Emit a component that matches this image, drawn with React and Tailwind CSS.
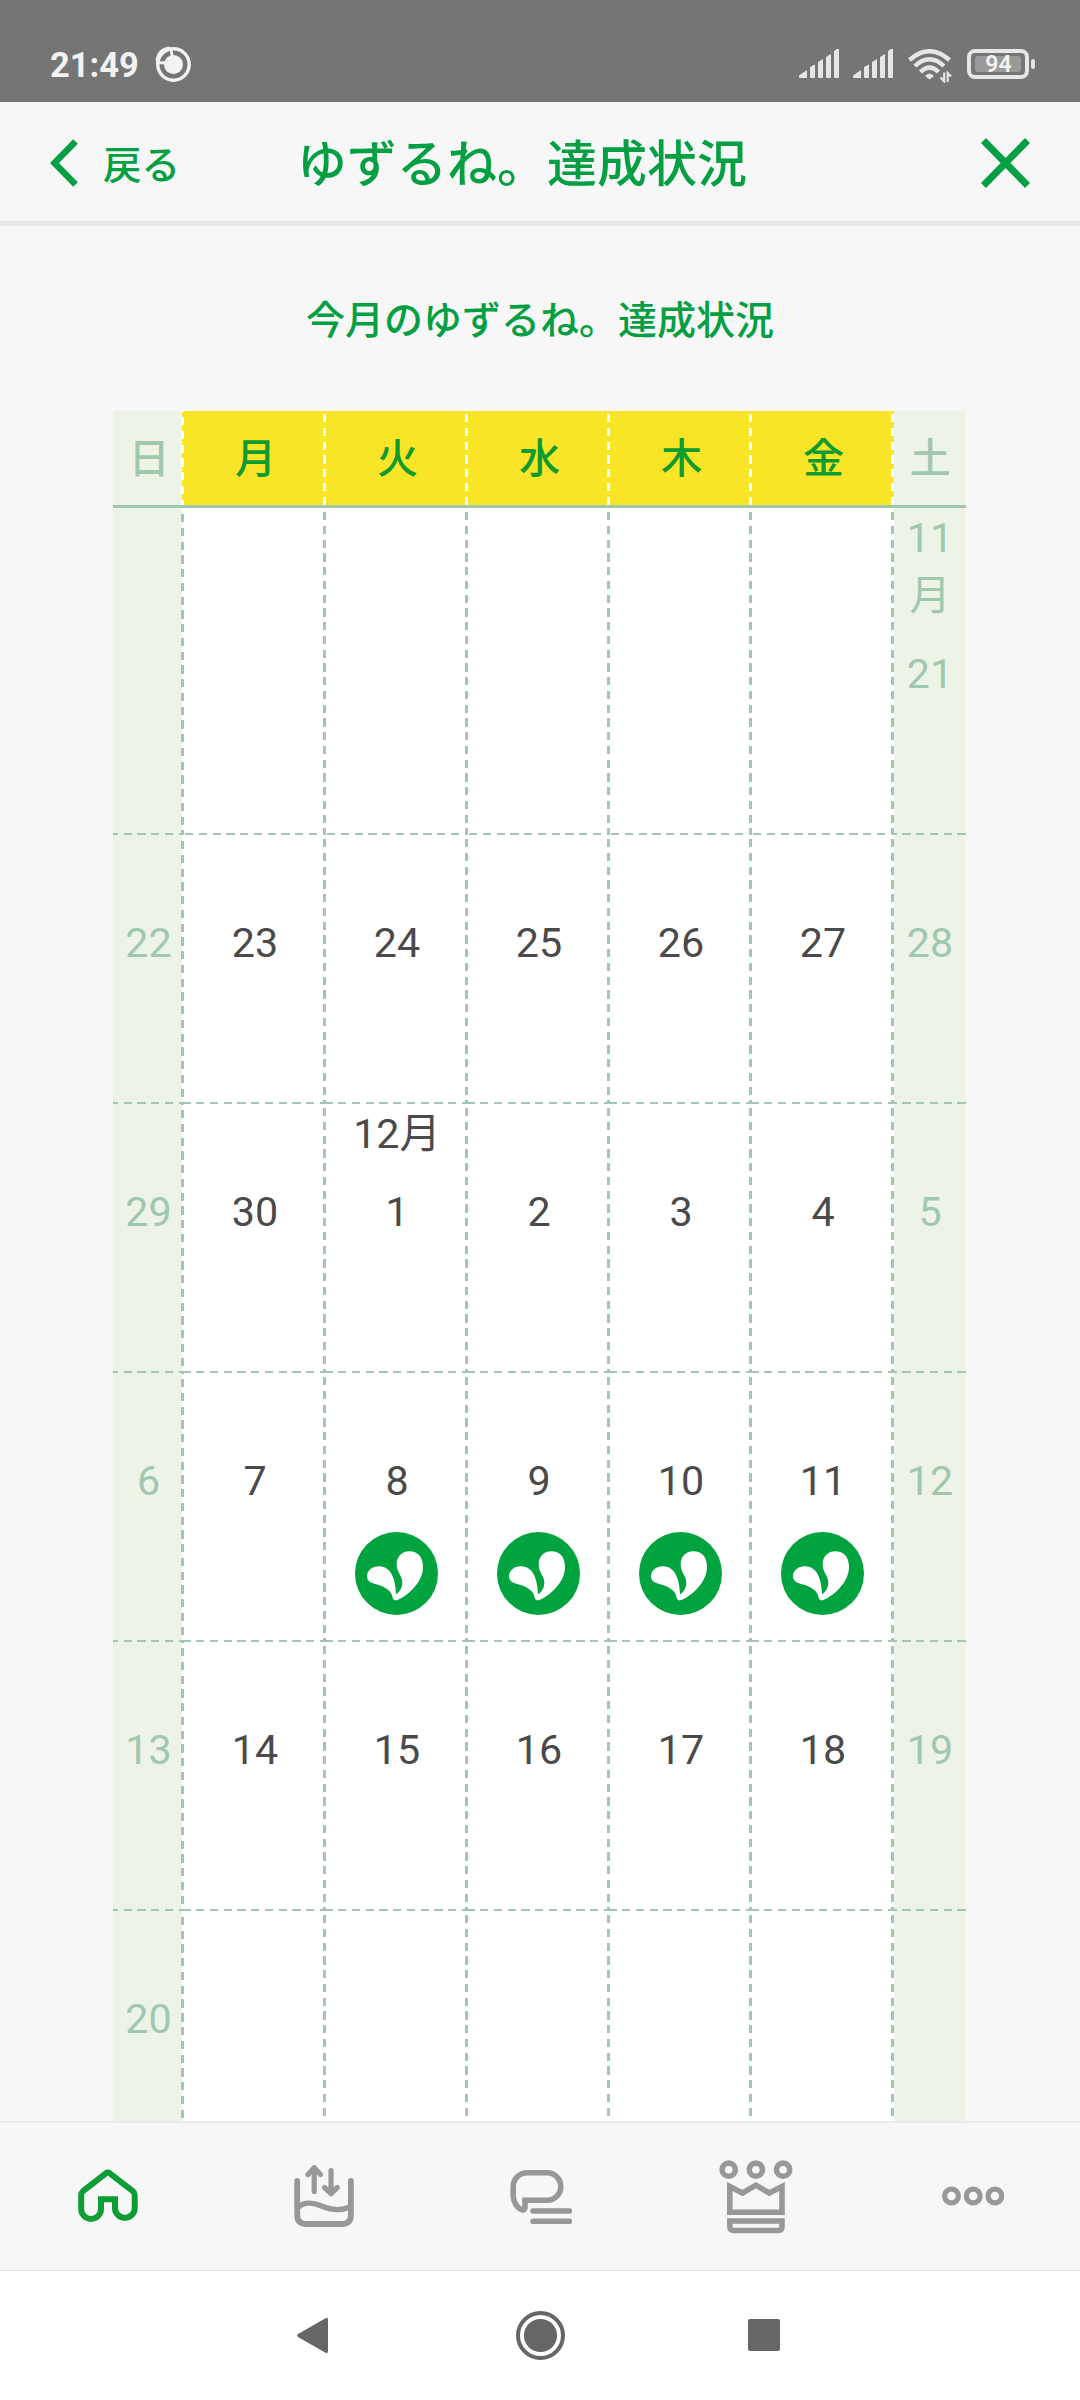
import clsx from 'clsx'

const WEEKDAYS = ['日', '月', '火', '水', '木', '金', '土']

const WEEKS = [
  [{}, {}, {}, {}, {}, {}, { month: '11月', day: 21 }],
  [{ day: 22 }, { day: 23 }, { day: 24 }, { day: 25 }, { day: 26 }, { day: 27 }, { day: 28 }],
  [{ day: 29 }, { day: 30 }, { month: '12月', day: 1 }, { day: 2 }, { day: 3 }, { day: 4 }, { day: 5 }],
  [{ day: 6 }, { day: 7 }, { day: 8, done: true }, { day: 9, done: true }, { day: 10, done: true }, { day: 11, done: true }, { day: 12 }],
  [{ day: 13 }, { day: 14 }, { day: 15 }, { day: 16 }, { day: 17 }, { day: 18 }, { day: 19 }],
  [{ day: 20 }, {}, {}, {}, {}, {}, {}],
]

const GRID = 'grid grid-cols-[71px_repeat(5,142px)_72px]'

// vertical dashes, the sunday column has its own phase
const V_DASH = 'bg-white bg-[repeating-linear-gradient(180deg,transparent_-1.5px_4px,#a2c6b1_4px_12.25px)]'
const V_DASH_SUN = 'bg-[repeating-linear-gradient(180deg,#a2c6b1_-7.75px_0.5px,transparent_0.5px_6px),linear-gradient(90deg,#edf4e7_1px,#fff_1px)]'
const V_DASH_HEAD = 'bg-[#f9e528] bg-[repeating-linear-gradient(180deg,transparent_-2.5px_3px,#fff_3px_11.25px)]'
const V_DASH_HEAD_SUN = 'bg-[repeating-linear-gradient(180deg,transparent_0.5px_6px,#fff_6px_14.25px),linear-gradient(90deg,#edf4e7_1px,#f9e528_1px)]'

// horizontal dashes
const H_DASH = 'bg-[repeating-linear-gradient(90deg,#a2c6b1_-1.7px_6.55px,transparent_6.55px_12.05px)]'
const H_DASH_FIRST = 'bg-[repeating-linear-gradient(90deg,transparent_-4.5px_1px,#a2c6b1_1px_9.25px)]'
const H_DASH_SUN = 'bg-[repeating-linear-gradient(90deg,#a2c6b1_-3.1px_5.15px,transparent_5.15px_10.65px)]'
const H_DASH_SAT = 'bg-[repeating-linear-gradient(90deg,#a2c6b1_-5.4px_2.85px,transparent_2.85px_8.35px)]'

function SignalIcon() {
  return (
    <svg width="40" height="29" viewBox="0 0 40 29" fill="#e6e6e6">
      <path d="M0 26.500 8 21V29H1Q0 29 0 28Z" />
      <path d="M11 18 16 15.500V28Q16 29 15 29H12Q11 29 11 28Z" />
      <path d="M19 13 24 10V28Q24 29 23 29H20Q19 29 19 28Z" />
      <path d="M27 8 32 5V28Q32 29 31 29H28Q27 29 27 28Z" />
      <path d="M35 2 38 0H40V28Q40 29 39 29H36Q35 29 35 28Z" />
    </svg>
  )
}

function WifiIcon() {
  return (
    <svg width="44" height="34" viewBox="0 0 44 34" fill="none" stroke="#e6e6e6" strokeWidth="4.400">
      <path d="M1.500 11Q21.500-6.500 41.500 11" />
      <path d="M7 17Q21.500 3.500 36 17" />
      <path d="M12.500 23Q21.500 14 30.500 23" />
      <path d="M21.500 30.500 17 27Q21.500 22 26 27Z" fill="#e6e6e6" stroke="none" />
      <path d="M36.200 23.500V32.500L32.500 28.500M39.700 33V24L43 27.500" strokeWidth="2.200" />
    </svg>
  )
}

function StatusBar() {
  return (
    <div className="flex h-[102px] shrink-0 items-start bg-[#757575] pl-[50px] pr-[45px]">
      <span className="mt-[45px] text-[34.5px] leading-[40px] font-bold text-[#f2f2f2]">21:49</span>
      <svg className="mt-[45px] ml-[15px]" width="38" height="38" viewBox="0 0 38 38" fill="none" stroke="#f2f2f2">
        <circle cx="19.500" cy="19.500" r="15.700" strokeWidth="3.400" />
        <circle cx="19.500" cy="19.500" r="9.500" fill="#f2f2f2" stroke="none" />
        <path d="M2 17.500 12 18M16.500 3 18.500 12" strokeWidth="2.800" />
        <path d="M3 16C4 8 9 3.500 16 3" strokeWidth="3" />
      </svg>
      <div className="mt-[49px] ml-auto flex items-start">
        <SignalIcon />
        <div className="w-[14px]" />
        <SignalIcon />
        <div className="w-[15px]" />
        <WifiIcon />
        <div className="ml-[15px] flex h-[30px] w-[62px] items-center justify-center rounded-[8px] border-4 border-[#e6e6e6]">
          <span className="flex h-4 w-[46px] items-center justify-center rounded-[3px] bg-[#999] pt-[3px] pl-[1px] text-[23px] font-semibold text-[#f2f2f2]">94</span>
        </div>
        <div className="mt-[10px] ml-[2px] h-[10px] w-1 rounded-[2px] bg-[#e6e6e6]" />
      </div>
    </div>
  )
}

function Header() {
  return (
    <header className="grid h-[124px] shrink-0 grid-cols-[250px_1fr_286px] items-center border-b-[5px] border-[#e6e6e6] bg-[#f7f7f7] pt-[3px] font-medium text-[#049f42]">
      <button className="flex items-center pl-[50px]">
        <svg width="28" height="48" viewBox="0 0 28 48" fill="none" stroke="#049f42" strokeWidth="6.500">
          <path d="M25.500 2.500 4.500 24 25.500 45.500" />
        </svg>
        <span className="ml-[25px] pt-[5px] text-[38.500px] leading-[56px]">戻る</span>
      </button>
      <h1 className="pt-[3px] text-center text-[50px] leading-[72px] font-medium whitespace-nowrap">ゆずるね。達成状況</h1>
      <button className="flex justify-end pr-[50px]">
        <svg width="49" height="50" viewBox="0 0 49 50" fill="none" stroke="#049f42" strokeWidth="7">
          <path d="M2.500 2.500 46.500 47.500M46.500 2.500 2.500 47.500" />
        </svg>
      </button>
    </header>
  )
}

function DoneMark() {
  return (
    <svg className="mr-[2px]" width="83" height="83" viewBox="0 0 249 249">
      <circle cx="124.500" cy="124.500" r="124.500" fill="#00a33e" />
      <path d="M123 187C122 150 112 103 72 103C50 103 36 117 36 133C36 145 44 152 60 156C85 162 107 174 111 190C113 202 117 206 124 205C140 202 204 160 204 105C204 75 188 58 163 58C142 58 125 72 125 97C125 122 142 132 142 152C142 167 134 180 123 187Z" fill="#fff" />
    </svg>
  )
}

function hDash(row, col) {
  if (col === 0) return H_DASH_SUN
  if (col === 6) return H_DASH_SAT
  return row === 0 ? H_DASH_FIRST : H_DASH
}

function DayCell({ month, day, done, row, col }) {
  const weekend = col === 0 || col === 6
  return (
    <div className={clsx('flex flex-col', weekend ? 'bg-[#edf4e7] text-[#a0c8ae]' : 'bg-white text-[#4a4a4a]')}>
      <div className="flex flex-1">
        <div className={clsx('flex flex-1 flex-col items-center pt-[1px] text-center text-[41.25px] leading-[58px]', col < 6 && 'pl-[3px]')}>
          <div className="min-h-[58px]">{month}</div>
          <div className="mt-5 h-[58px]">{day}</div>
          <div className="flex h-[130px] justify-center pt-[22px]">{done && <DoneMark />}</div>
        </div>
        {col < 6 && <div className={clsx('w-[3px]', col === 0 ? V_DASH_SUN : V_DASH)} />}
      </div>
      <div className={clsx('h-[2px]', hDash(row, col))} />
    </div>
  )
}

function Calendar() {
  return (
    <div className="mr-[114px] ml-[113px]">
      <div className={clsx(GRID, 'h-[97px] border-b-[3px] border-[#9fc6ae]')}>
        {WEEKDAYS.map((name, col) => {
          const weekend = col === 0 || col === 6
          return (
            <div key={name} className={clsx('flex', weekend ? 'bg-[#edf4e7] text-[#a0c8ae]' : 'bg-[#f9e528] text-[#0f9b2e]')}>
              <div className={clsx('flex flex-1 items-center justify-center pt-[4px] text-[41.25px] font-medium', col < 6 && 'pl-[4px]')}>{name}</div>
              {col < 6 && <div className={clsx('w-[3px]', col === 0 ? V_DASH_HEAD_SUN : V_DASH_HEAD)} />}
            </div>
          )
        })}
      </div>
      {WEEKS.map((week, row) => (
        <div key={row} className={GRID}>
          {week.map((cell, col) => <DayCell key={col} {...cell} row={row} col={col} />)}
        </div>
      ))}
    </div>
  )
}

function TabBar() {
  return (
    <nav className="grid h-[150px] shrink-0 grid-cols-5 items-start justify-items-center border-t-2 border-b border-t-[#ebebeb] border-b-[#e3e3e3] bg-[#f7f7f7]">
      <svg className="mt-[46px]" width="60" height="54" viewBox="0 0 60 54" fill="none" stroke="#0c9d35" strokeWidth="6">
        <path d="M3.200 40V26Q3.200 23.700 5 22.200L27.800 4.300Q29.800 2.800 31.800 4.300L54.800 22.200Q56.700 23.700 56.700 26V40A9.900 9.900 0 0 1 37 40V30.300H23V40A9.900 9.900 0 0 1 3.200 40Z" />
      </svg>
      <svg className="mt-[41px]" width="60" height="64" viewBox="0 0 60 64" fill="none" stroke="#989898" strokeWidth="5.800" strokeLinecap="round" strokeLinejoin="round">
        <path d="M3.200 17V51Q3.200 60 12.500 60H47.500Q56.900 60 56.900 51V17" />
        <path d="M4 43.500C11 36.500 20 39 28 42.300C37 46 46 47.500 56 43" strokeWidth="5.400" />
        <path d="M20.200 27.500V3.500M14 10.500 20.200 3.700 26.500 10.500M37 6.500V29.500M30.500 23.500 37 29.500 43.300 23.500" strokeWidth="5.200" />
      </svg>
      <svg className="mt-[46px]" width="64" height="56" viewBox="-2 0 64 56" fill="none" stroke="#989898" strokeWidth="5.600">
        <path d="M15 31.300H37A13.800 13.800 0 0 0 37 3.700H18C9 3.700 3.200 9.500 3.200 18V27C3.200 33.500 8 39.500 11.700 40.700Q15 42 15 38Z" />
        <path d="M23 42H59.500M23 52.300H59.500" strokeLinecap="round" />
      </svg>
      <svg className="mt-[37px]" width="74" height="74" viewBox="0 0 74 74" fill="none" stroke="#989898" strokeWidth="5.600">
        <circle cx="9.700" cy="9.700" r="6.600" />
        <circle cx="36.900" cy="9.700" r="6.600" />
        <circle cx="64.100" cy="9.700" r="6.600" />
        <path d="M10.800 26.500 23.500 33 36.900 25.200 50.300 33 63 26.500V52.200H10.800Z" />
        <path d="M10.800 61H63V66.500Q63 70.500 59 70.500H14.800Q10.800 70.500 10.800 66.500Z" />
      </svg>
      <svg className="mt-[63px]" width="64" height="20" viewBox="-1 0 64 20" fill="none" stroke="#989898" strokeWidth="5.200">
        <circle cx="10.500" cy="10" r="6.900" />
        <circle cx="32.200" cy="10" r="6.900" />
        <circle cx="53.900" cy="10" r="6.900" />
      </svg>
    </nav>
  )
}

function SystemNav() {
  return (
    <div className="flex h-[129px] shrink-0 items-center bg-white pl-[297px]">
      <svg width="31" height="37" viewBox="0 0 31 38" preserveAspectRatio="none" fill="#666">
        <path d="M1 17.500 28.500 1.200Q31 0 31 3V35Q31 38 28.500 36.800L1 20.500Q-.5 19 1 17.500Z" />
      </svg>
      <svg className="ml-[188px]" width="49" height="49" viewBox="0 0 49 49">
        <circle cx="24.500" cy="24.500" r="22.500" fill="none" stroke="#666" strokeWidth="4" />
        <circle cx="24.500" cy="24.500" r="16.600" fill="#666" />
      </svg>
      <div className="mb-[1px] ml-[183px] h-8 w-8 rounded-[2px] bg-[#666]" />
    </div>
  )
}

export default function App() {
  return (
    <div className="flex h-[2400px] w-[1080px] flex-col overflow-hidden bg-[#f7f7f7] font-[Roboto,'Noto_Sans_CJK_JP',sans-serif]" lang="ja">
      <StatusBar />
      <Header />
      <main className="min-h-0 flex-1 overflow-hidden">
        <h2 className="mt-[67px] mb-[62px] text-center text-[39px] leading-[56px] font-medium text-[#049f42]">今月のゆずるね。達成状況</h2>
        <Calendar />
      </main>
      <TabBar />
      <SystemNav />
    </div>
  )
}
